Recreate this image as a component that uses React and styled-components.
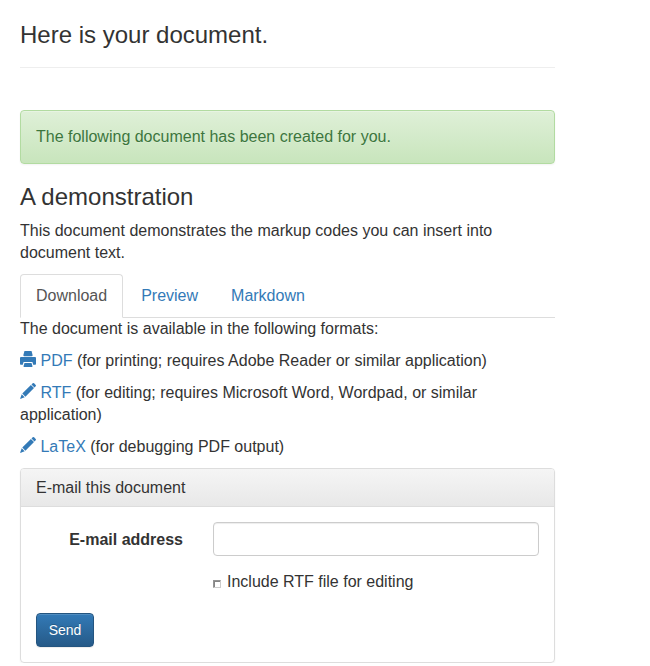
import React from 'react';
import styled, { createGlobalStyle } from 'styled-components';

const Global = createGlobalStyle`
  * { box-sizing: border-box; }
  html { overflow: hidden; }
  body { margin: 0; background: #fff; color: #333; font: 16px/22px "Liberation Sans", Arial, sans-serif; overflow: hidden; }
`;
const Page = styled.main`width: 535px; margin-left: 20px; padding-top: 20px;`;
const Title = styled.h1`
  margin: 0 0 42px; padding-bottom: 17px; border-bottom: 1px solid #eee;
  font-size: 24px; font-weight: 400; line-height: 30px;
`;
const Alert = styled.div`
  height: 54px; padding: 15px; margin-bottom: 20px; border: 1px solid #b2dba1; border-radius: 4px;
  background: linear-gradient(to bottom, #dff0d8, #c8e5bc); color: #3c763d;
  text-shadow: 0 1px 0 rgba(255,255,255,.2);
  box-shadow: inset 0 1px 0 rgba(255,255,255,.25), 0 1px 2px rgba(0,0,0,.05);
`;
const Subtitle = styled.h2`margin: 0 0 10px; font-size: 24px; font-weight: 400; line-height: 26px;`;
const Paragraph = styled.p`margin: 0 0 10px;`;
const Tabs = styled.nav`display: flex; height: 44px; border-bottom: 1px solid #ddd;`;
const Tab = styled.a`
  height: 44px; padding: 10px 15px; margin-right: ${p => (p.$active ? 2 : 1)}px;
  border: 1px solid; border-color: ${p => p.$active ? '#ddd #ddd #fff' : 'transparent'};
  border-radius: 4px 4px 0 0; color: ${p => p.$active ? '#555' : '#337ab7'};
  background: ${p => p.$active ? '#fff' : 'transparent'};
`;
const Link = styled.a`color: #337ab7;`;
const Icon = styled.svg`
  display: inline-block; width: 16px; height: 16px; vertical-align: -1px; fill: #337ab7;
`;
const Panel = styled.section`
  border: 1px solid #ddd; border-radius: 4px; height: 195px; box-shadow: 0 1px 2px rgba(0,0,0,.05);
`;
const PanelHeading = styled.div`
  height: 38px; padding: 8px 15px; border-bottom: 1px solid #ddd; border-radius: 3px 3px 0 0;
  background: linear-gradient(to bottom, #f5f5f5, #e8e8e8);
`;
const Form = styled.form`padding: 15px;`;
const Row = styled.div`display: grid; grid-template-columns: 147px 326px; column-gap: 30px; height: 34px; align-items: center;`;
const Label = styled.label`padding-top: 2px; font-weight: 700; text-align: right;`;
const Input = styled.input`
  width: 326px; height: 34px; padding: 6px 12px; border: 1px solid #ccc; border-radius: 4px;
  background: #fff; box-shadow: inset 0 1px 1px rgba(0,0,0,.075); font: inherit;
`;
const CheckLabel = styled.label`
  grid-column: 2; display: flex; align-items: center; gap: 6px; height: 22px;
`;
const CheckRow = styled(Row)`height: 22px; margin: 15px 0 20px;`;
const CheckBox = styled.input`
  appearance: none; width: 8px; height: 8px; margin: 4px 0 0;
  border: 1px solid; border-color: #949494 #ccc #ccc #949494; background: #fff;
  box-shadow: inset 1px 1px 0 #858585;
`;
const Button = styled.button`
  display: block; width: 58px; height: 34px; padding: 0; border: 1px solid #245580; border-radius: 4px;
  background: linear-gradient(to bottom, #337ab7, #265a88); color: #fff;
  font: 14px/20px "Liberation Sans", Arial, sans-serif; text-shadow: 0 -1px 0 rgba(0,0,0,.2);
  box-shadow: inset 0 1px 0 rgba(255,255,255,.15), 0 1px 1px rgba(0,0,0,.075);
`;

const PrintIcon = () => (
  <Icon viewBox="0 0 16 16">
    <path d="M5 0h6q.5 0 .7.5l.9 3.5q.1 1.3-1 1.3H4.400q-1.100 0-1-1.300L4.300.5Q4.500 0 5 0z" />
    <path d="M1 6h14q1 0 1 1v6q0 .8-.8.8H13.200L12.400 11H3.600l-.8 2.800H.8q-.8 0-.8-.8V7q0-1 1-1z" />
    <path d="M4.500 12h7l1 3.200q.1.700-.6.700H4.100q-.7 0-.6-.7z" />
  </Icon>
);
const PencilIcon = () => (
  <Icon viewBox="0 0 16 16">
    <path d="M12.700.3q.7-.6 1.400 0l1.600 1.600q.6.700 0 1.400L14.500 4.500 11.500 1.500zM10.900 2 14 5.100 5.400 13.700 2.300 10.600zM1.700 11.300 4.700 14.300 0 16z" />
  </Icon>
);

export default function App() {
  return (
    <>
      <Global />
      <Page>
        <Title>Here is your document.</Title>
        <Alert>The following document has been created for you.</Alert>
        <Subtitle>A demonstration</Subtitle>
        <Paragraph>This document demonstrates the markup codes you can insert into document text.</Paragraph>
        <Tabs>
          <Tab $active>Download</Tab>
          <Tab>Preview</Tab>
          <Tab>Markdown</Tab>
        </Tabs>
        <Paragraph>The document is available in the following formats:</Paragraph>
        <Paragraph><PrintIcon /> <Link>PDF</Link> (for printing; requires Adobe Reader or similar application)</Paragraph>
        <Paragraph><PencilIcon /> <Link>RTF</Link> (for editing; requires Microsoft Word, Wordpad, or similar application)</Paragraph>
        <Paragraph><PencilIcon /> <Link>LaTeX</Link> (for debugging PDF output)</Paragraph>
        <Panel>
          <PanelHeading>E-mail this document</PanelHeading>
          <Form>
            <Row>
              <Label htmlFor="email">E-mail address</Label>
              <Input id="email" />
            </Row>
            <CheckRow>
              <CheckLabel><CheckBox type="checkbox" />Include RTF file for editing</CheckLabel>
            </CheckRow>
            <Button type="button">Send</Button>
          </Form>
        </Panel>
      </Page>
    </>
  );
}
